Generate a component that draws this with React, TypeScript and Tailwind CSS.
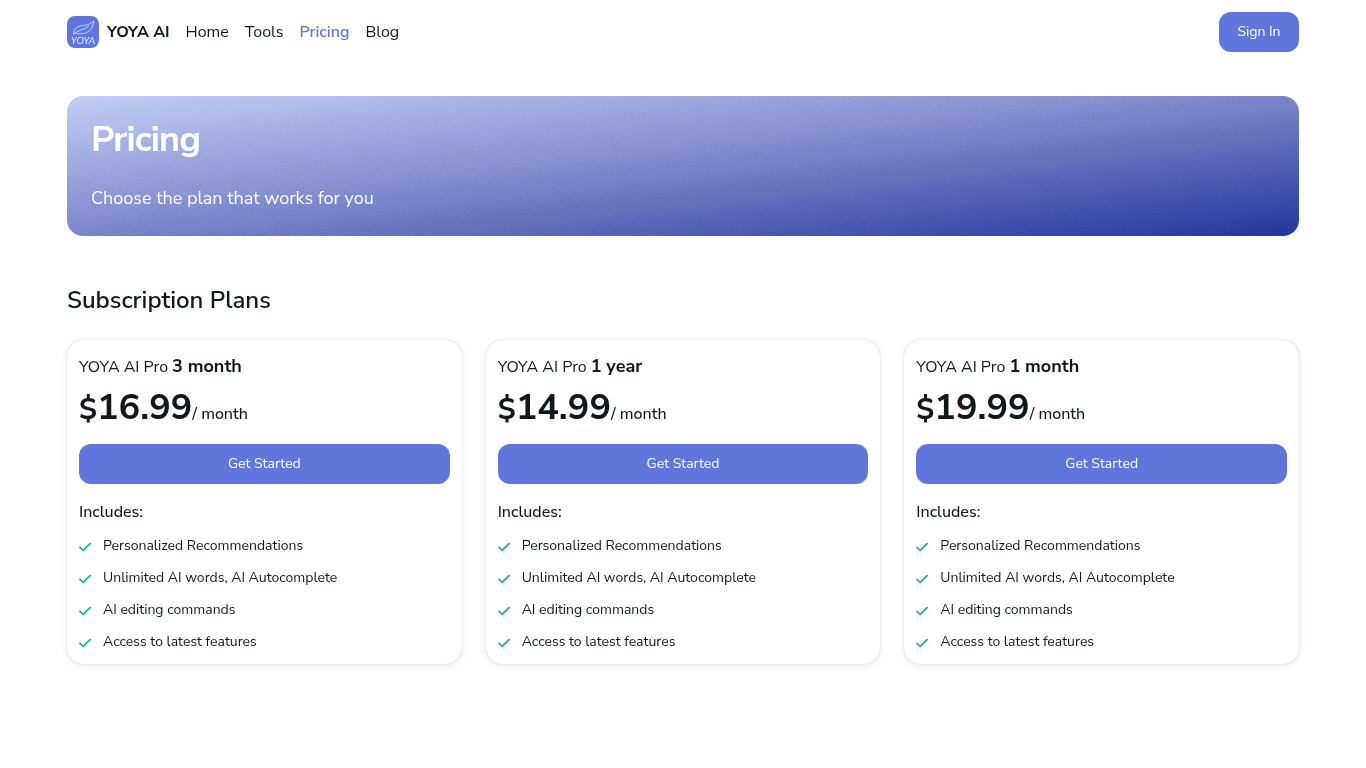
import { useState } from "react";

interface Plan {
  id: string;
  period: string;
  price: string;
}

const navLinks = ["Home", "Tools", "Pricing", "Blog"];

const plans: Plan[] = [
  { id: "quarter", period: "3 month", price: "16.99" },
  { id: "year", period: "1 year", price: "14.99" },
  { id: "month", period: "1 month", price: "19.99" },
];

const features = [
  "Personalized Recommendations",
  "Unlimited AI words, AI Autocomplete",
  "AI editing commands",
  "Access to latest features",
];

function Logo() {
  return (
    <svg viewBox="0 0 32 32" className="size-8" aria-hidden="true">
      <rect width="32" height="32" rx="8" fill="#6076dc" />
      <g fill="none" stroke="#dfe5fb" strokeWidth="0.8" strokeLinecap="round" strokeLinejoin="round">
        <path d="M6.5 17.5C6.8 12.5 10.5 10.3 15.5 9.6C20 9 24 8.2 26.8 5C26.2 11 23.5 15.8 17.5 17.3C14 18.2 10.5 17.8 8.2 17.2" />
        <path d="M6.5 18.3C10 14.3 16.5 13.8 21.5 10.4" />
      </g>
      <text
        x="16"
        y="28"
        textAnchor="middle"
        fontSize="10"
        fontStyle="italic"
        fontWeight="400"
        fill="#e4e9fc"
        fontFamily="Lato, sans-serif"
      >
        YOYA
      </text>
    </svg>
  );
}

function CheckIcon() {
  return (
    <svg viewBox="0 0 12 12" className="mt-px size-3 shrink-0" aria-hidden="true">
      <path
        d="M1 6.4L4.2 9.4L11.1 2.7"
        fill="none"
        stroke="#23b083"
        strokeWidth="1.8"
        strokeLinecap="round"
        strokeLinejoin="round"
      />
    </svg>
  );
}

function Header() {
  const [active, setActive] = useState("Pricing");

  return (
    <header className="mx-auto flex h-16 w-full max-w-7xl items-center justify-between px-6">
      <nav className="flex items-center gap-4">
        <a href="#home" className="flex items-center gap-2 font-bold">
          <Logo />
          YOYA AI
        </a>
        {navLinks.map((link) => (
          <a
            key={link}
            href={`#${link.toLowerCase()}`}
            onClick={() => setActive(link)}
            className={active === link ? "font-semibold text-[#6076dc]" : ""}
          >
            {link}
          </a>
        ))}
      </nav>
      <button type="button" className="h-10 w-20 rounded-xl bg-[#6076dc] text-sm text-white">
        Sign In
      </button>
    </header>
  );
}

function Banner() {
  return (
    <section className="relative overflow-hidden rounded-2xl bg-linear-to-br/srgb from-[#bccaf6] via-[#727dc6] to-[#213296] p-6 text-white">
      {/* grain */}
      <svg className="absolute inset-0 size-full opacity-30 mix-blend-overlay" aria-hidden="true">
        <filter id="grain">
          <feTurbulence type="fractalNoise" baseFrequency="0.7" numOctaves="3" stitchTiles="stitch" />
          <feColorMatrix type="saturate" values="0" />
        </filter>
        <rect width="100%" height="100%" filter="url(#grain)" />
      </svg>
      <div className="relative flex flex-col gap-6">
        <h1 className="text-4xl leading-10 font-bold tracking-tight">Pricing</h1>
        <p className="text-lg leading-7">Choose the plan that works for you</p>
      </div>
    </section>
  );
}

function PlanCard({ plan }: { plan: Plan }) {
  return (
    <article className="rounded-2xl bg-white p-3 shadow-[0_0_5px_rgba(0,0,0,0.02),0_2px_10px_rgba(0,0,0,0.06),0_0_1px_rgba(0,0,0,0.3)]">
      <h3 className="flex items-baseline gap-1">
        <span className="leading-6">YOYA AI Pro</span>
        <span className="text-lg leading-7 font-bold">{plan.period}</span>
      </h3>
      <p className="mt-2 flex items-baseline">
        <span className="text-3xl leading-9 font-bold">$</span>
        <span className="text-4xl leading-10 font-bold">{plan.price}</span>
        <span className="leading-6 font-medium">/ month</span>
      </p>
      <button type="button" className="mt-4 h-10 w-full rounded-xl bg-[#6076dc] text-sm text-white">
        Get Started
      </button>
      <p className="mt-4 leading-6 font-medium">Includes:</p>
      <ul className="mt-3 flex flex-col gap-3 text-sm">
        {features.map((feature) => (
          <li key={feature} className="flex items-center gap-3 leading-5">
            <CheckIcon />
            {feature}
          </li>
        ))}
      </ul>
    </article>
  );
}

export default function App() {
  return (
    <div className="min-h-screen bg-white font-['Nunito_Sans','Nunito','Open_Sans',sans-serif] text-[#11181c]">
      <Header />
      <main className="mx-auto w-full max-w-7xl px-6 py-8">
        <Banner />
        <h2 className="mt-12 text-2xl leading-8 font-semibold">Subscription Plans</h2>
        <div className="mt-6 grid grid-cols-1 gap-6 md:grid-cols-3">
          {plans.map((plan) => (
            <PlanCard key={plan.id} plan={plan} />
          ))}
        </div>
      </main>
    </div>
  );
}
